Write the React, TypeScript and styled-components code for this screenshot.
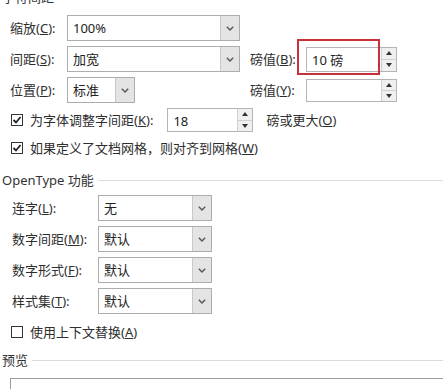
import styled, { createGlobalStyle } from 'styled-components';

const GlobalStyle = createGlobalStyle`
	html, body {
		margin: 0;
		padding: 0;
		background: #fff;
	}
	body {
		font-family: "Noto Sans", "Noto Sans CJK SC", sans-serif;
		font-size: 13px;
		color: #2a2a2a;
	}
`;

const Chevron = () => (
	<svg width="8" height="5" viewBox="0 0 8 5">
		<polyline points="0.8,0.8 4,4 7.2,0.8" fill="none" stroke="#555" strokeWidth="1.4" />
	</svg>
);

const Tri = ({ up }: { up?: boolean }) => (
	<svg width="6" height="4" viewBox="0 0 6 4">
		<polygon points={up ? '0,4 3,0 6,4' : '0,0 6,0 3,4'} fill="#333" />
	</svg>
);

const Key = ({ k }: { k: string }) => (
	<>
		(<u>{k}</u>)
	</>
);

const Select = ({ value, width }: { value: string; width: number }) => (
	<SelectBox $width={width}>
		<Value>{value}</Value>
		<DropButton>
			<Chevron />
		</DropButton>
	</SelectBox>
);

const Spin = ({
	value,
	width,
	height = 24,
	highlight,
}: {
	value: string;
	width: number;
	height?: number;
	highlight?: boolean;
}) => (
	<SpinBox $width={width} $height={height}>
		<Value>{value}</Value>
		<SpinButtons>
			<SpinHalf>
				<Tri up />
			</SpinHalf>
			<SpinHalf>
				<Tri />
			</SpinHalf>
		</SpinButtons>
		{highlight && <Highlight />}
	</SpinBox>
);

const Check = ({ checked }: { checked?: boolean }) => (
	<CheckBox>
		{checked && (
			<svg width="10" height="10" viewBox="0 0 10 10">
				<polyline points="1.5,5 4,7.5 8.5,2" fill="none" stroke="#222" strokeWidth="1.8" />
			</svg>
		)}
	</CheckBox>
);

const App = () => {
	return (
		<Page>
			<GlobalStyle />
			<SectionHeader $top={-12}>
				<HeaderText>字符间距</HeaderText>
				<HeaderLine />
			</SectionHeader>

			<TopGrid>
				<Label>
					缩放<Key k="C" />:
				</Label>
				<Cell $span={4}>
					<Select value="100%" width={173} />
				</Cell>

				<Label>
					间距<Key k="S" />:
				</Label>
				<Cell>
					<Select value="加宽" width={173} />
				</Cell>
				<span />
				<Label>
					磅值<Key k="B" />:
				</Label>
				<Cell>
					<Spin value="10 磅" width={91} height={25} highlight />
				</Cell>

				<Label>
					位置<Key k="P" />:
				</Label>
				<Cell>
					<Select value="标准" width={68} />
				</Cell>
				<span />
				<Label>
					磅值<Key k="Y" />:
				</Label>
				<Cell>
					<Spin value="" width={91} height={23} />
				</Cell>
			</TopGrid>

			<CheckRow $top={5} $height={24}>
				<Check checked />
				<span>
					为字体调整字间距<Key k="K" />:
				</span>
				<Spaced $left={7}>
					<Spin value="18" width={86} />
				</Spaced>
				<Spaced $left={6}>
					磅或更大<Key k="O" />
				</Spaced>
			</CheckRow>
			<CheckRow $top={7} $height={18}>
				<Check checked />
				<span>
					如果定义了文档网格，则对齐到网格<Key k="W" />
				</span>
			</CheckRow>

			<SectionHeader $top={14}>
				<HeaderText>OpenType 功能</HeaderText>
				<HeaderLine />
			</SectionHeader>

			<FeatureGrid>
				<Label>
					连字<Key k="L" />:
				</Label>
				<Select value="无" width={114} />
				<Label>
					数字间距<Key k="M" />:
				</Label>
				<Select value="默认" width={114} />
				<Label>
					数字形式<Key k="F" />:
				</Label>
				<Select value="默认" width={114} />
				<Label>
					样式集<Key k="T" />:
				</Label>
				<Select value="默认" width={114} />
			</FeatureGrid>

			<CheckRow $top={9} $height={18}>
				<Check />
				<span>
					使用上下文替换<Key k="A" />
				</span>
			</CheckRow>

			<SectionHeader $top={10}>
				<HeaderText>预览</HeaderText>
				<HeaderLine />
			</SectionHeader>

			<Preview />
		</Page>
	);
};

const Page = styled.div`
	width: 443px;
	height: 389px;
	overflow: hidden;
`;

const SectionHeader = styled.div<{ $top: number }>`
	display: flex;
	align-items: center;
	height: 18px;
	margin-top: ${(p) => p.$top}px;
	padding-left: 2px;
`;

const HeaderText = styled.span`
	line-height: 18px;
	color: #333;
`;

const HeaderLine = styled.div`
	flex: 1;
	margin-left: 4px;
	border-top: 1px solid #dcdcdc;
`;

const TopGrid = styled.div`
	display: grid;
	grid-template-columns: 57px 173px 10px 56px 91px;
	grid-auto-rows: 26px;
	row-gap: 5px;
	align-items: center;
	padding-left: 10px;
	margin-top: 9px;
`;

const Cell = styled.div<{ $span?: number }>`
	display: flex;
	align-items: center;
	grid-column: ${(p) => (p.$span ? `span ${p.$span}` : 'auto')};
`;

const Label = styled.span`
	line-height: 18px;
	white-space: nowrap;
	color: #2e2e2e;
`;

const SelectBox = styled.div<{ $width: number }>`
	box-sizing: border-box;
	display: flex;
	width: ${(p) => p.$width}px;
	height: 26px;
	border: 1px solid #adadad;
	background: #fff;
`;

const Value = styled.span`
	flex: 1;
	padding-left: 5px;
	line-height: 24px;
	color: #222;
	white-space: nowrap;
`;

const DropButton = styled.div`
	width: 18px;
	display: flex;
	align-items: center;
	justify-content: center;
	background: #e4e4e4;
	border-left: 1px solid #c9c9c9;
`;

const SpinBox = styled.div<{ $width: number; $height: number }>`
	position: relative;
	box-sizing: border-box;
	display: flex;
	width: ${(p) => p.$width}px;
	height: ${(p) => p.$height}px;
	border: 1px solid #b4b4b4;
	background: #fff;
`;

const SpinButtons = styled.div`
	width: 14px;
	display: flex;
	flex-direction: column;
	border-left: 1px solid #d0d0d0;
`;

const SpinHalf = styled.div`
	flex: 1;
	display: flex;
	align-items: center;
	justify-content: center;
	background: #f0f0f0;
	& + & {
		border-top: 1px solid #d0d0d0;
	}
`;

const Highlight = styled.div`
	position: absolute;
	left: -10px;
	top: -9px;
	width: 83px;
	height: 36px;
	border: 2px solid #c8303c;
	box-sizing: border-box;
	pointer-events: none;
`;

const CheckRow = styled.div<{ $top: number; $height: number }>`
	display: flex;
	align-items: center;
	gap: 7px;
	height: ${(p) => p.$height}px;
	margin-top: ${(p) => p.$top}px;
	padding-left: 11px;
	line-height: 18px;
	white-space: nowrap;
	color: #2e2e2e;
`;

const Spaced = styled.span<{ $left: number }>`
	display: flex;
	align-items: center;
	margin-left: ${(p) => p.$left}px;
`;

const CheckBox = styled.span`
	box-sizing: border-box;
	width: 12px;
	height: 12px;
	border: 1px solid #333;
	display: flex;
	align-items: center;
	justify-content: center;
	background: #fff;
`;

const FeatureGrid = styled.div`
	display: grid;
	grid-template-columns: 86px 114px;
	grid-auto-rows: 26px;
	row-gap: 5px;
	align-items: center;
	padding-left: 12px;
	margin-top: 6px;
`;

const Preview = styled.div`
	margin-top: 9px;
	margin-left: 10px;
	width: 460px;
	height: 40px;
	border: 1px solid #9c9c9c;
`;

export default App;
